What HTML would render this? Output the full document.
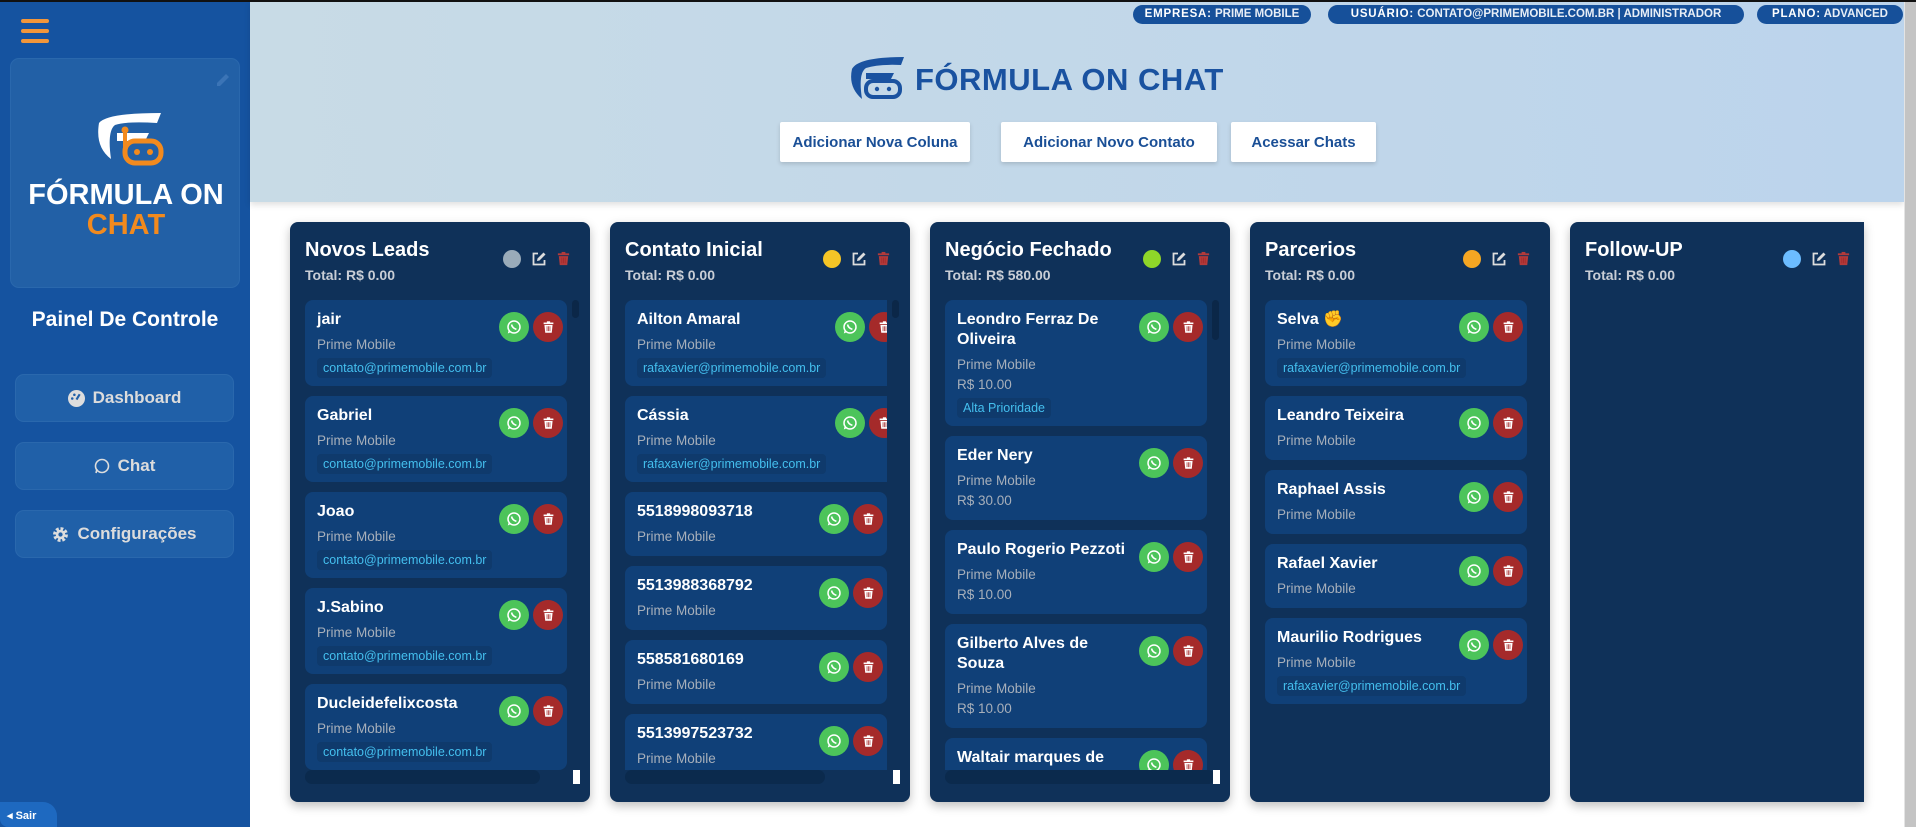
<!DOCTYPE html>
<html><head><meta charset="utf-8"><style>
*{box-sizing:border-box;margin:0;padding:0}
body{width:1916px;height:827px;overflow:hidden;font-family:"Liberation Sans",sans-serif;background:#fff;position:relative}
#top{position:absolute;left:0;top:0;width:1916px;height:2px;background:#111;z-index:9}
#side{position:absolute;left:0;top:0;width:250px;height:827px;background:#1553a0}
.hb{position:absolute;left:21px;width:28px;height:4px;border-radius:2px;background:#f2963a}
#logo{position:absolute;left:10px;top:58px;width:230px;height:230px;background:#2260a6;border-radius:9px;border:1px solid #2a68ad}
#logo .t1{position:absolute;left:0;width:230px;top:120px;text-align:center;color:#fff;font-weight:bold;font-size:29px;white-space:nowrap}
#logo .t2{position:absolute;left:0;width:230px;top:150px;text-align:center;color:#f28a1e;font-weight:bold;font-size:29px;white-space:nowrap}
#pc{position:absolute;left:0;width:250px;top:308px;text-align:center;color:#fff;font-weight:bold;font-size:21px}
.nav{position:absolute;left:15px;width:219px;height:48px;border-radius:9px;background:#2060a8;border:1px solid #2a68ad;color:#dcdcdc;font-weight:bold;font-size:17px;display:flex;align-items:center;justify-content:center;gap:8px}
#sair{position:absolute;left:0;top:802px;width:57px;height:25px;background:#1e69c0;border-radius:0 14px 0 8px;color:#fff;font-weight:bold;font-size:11px;padding:7px 0 0 7px}
#head{position:absolute;left:250px;top:2px;width:1654px;height:200px;background:linear-gradient(90deg,#c8dbe6,#bcd4ec);box-shadow:0 3px 6px rgba(0,0,0,.12)}
.bd{position:absolute;top:3px;height:19px;background:#16509a;border-radius:10px;color:#e8eef6;font-size:11.5px;font-weight:bold;line-height:19px;text-align:center;white-space:nowrap}
.bd b{color:#fff;letter-spacing:.8px}
#title{position:absolute;left:915px;top:62px;color:#1a52a0;font-weight:bold;font-size:31px;letter-spacing:.5px;white-space:nowrap}
.btn{position:absolute;top:122px;height:40px;background:#fff;color:#1a4f96;font-weight:bold;font-size:15px;display:flex;align-items:center;justify-content:center;box-shadow:0 2px 4px rgba(0,0,0,.15);border-radius:2px}
#sb{position:absolute;left:1904px;top:0;width:12px;height:827px;background:#c4c4c4;border-left:1px solid #e4e4e4}
.col{position:absolute;top:222px;width:300px;height:580px;background:#0f3159;border-radius:8px;box-shadow:0 4px 10px rgba(0,0,0,.25);overflow:hidden}
.col h2{position:absolute;left:15px;top:17px;color:#fff;font-size:20px;font-weight:bold}
.col .tot{position:absolute;left:15px;top:45px;color:#c9ced6;font-size:14px;font-weight:bold}
.dot{position:absolute;top:28px;left:213px;width:18px;height:18px;border-radius:50%}
.ed{position:absolute;top:29px;left:241px}
.tr{position:absolute;top:28px;left:266px}
.list{position:absolute;left:15px;top:78px;width:262px;height:470px;overflow:hidden}
.vs{position:absolute;left:282px;top:78px;width:7px;height:18px;border-radius:4px;background:#0b2748}
.hs{position:absolute;left:15px;top:548px;width:235px;height:14px;border-radius:7px;background:#0b2a4d}
.sq{position:absolute;left:283px;top:548px;width:7px;height:14px;background:#fff}
.card{position:relative;background:#104078;border-radius:8px;padding:10px 12px 8px;margin-bottom:10px}
.card .n{color:#fff;font-weight:bold;font-size:16px;line-height:20px;padding-right:58px}
.card .c{color:#a7afba;font-size:13.5px;line-height:18px;margin-top:6px}
.card .v{color:#a7afba;font-size:13.5px;line-height:18px;margin-top:2px}
.card .e{display:inline-block;background:#0f3a6c;color:#44bfee;font-size:12.5px;line-height:16px;padding:2px 6px;border-radius:4px;margin-top:4px}
.card.b{padding-bottom:10px}
.wa,.rd{position:absolute;top:12px;width:30px;height:30px;border-radius:50%;display:flex;align-items:center;justify-content:center}
.wa{right:38px;background:#4cc45a}
.rd{right:4px;background:#a52a2a}
</style></head><body>
<div id="top"></div>
<div id="side">
<div class="hb" style="top:19px"></div><div class="hb" style="top:29px"></div><div class="hb" style="top:39px"></div>
<div id="logo">
<svg style="position:absolute;left:204px;top:12px" width="16" height="16" viewBox="0 0 16 16"><path d="M2 12 L11 3 L14 6 L5 15 L2 15Z" fill="#3b74b6"/></svg>
<svg style="position:absolute;left:76px;top:52px" width="80" height="58" viewBox="0 0 80 58"><path d="M12 12 Q20 2 74 2 L70 12 Q40 10 28 14 Q20 20 24 48 Q8 36 12 12Z" fill="#fff"/><path d="M30 22 L62 22 L58 30 L30 30Z" fill="#fff"/><rect x="38" y="30" width="36" height="22" rx="10" fill="none" stroke="#f28a1e" stroke-width="5"/><circle cx="50" cy="41" r="3" fill="#f28a1e"/><circle cx="63" cy="41" r="3" fill="#f28a1e"/><path d="M38 38 L38 20" stroke="#f28a1e" stroke-width="4"/><circle cx="38" cy="19" r="3.5" fill="#f28a1e"/></svg>
<div class="t1">FÓRMULA ON</div><div class="t2">CHAT</div></div>
<div id="pc">Painel De Controle</div>
<div class="nav" style="top:374px"><svg width="17" height="17" viewBox="0 0 16 16"><circle cx="8" cy="8" r="8" fill="#ddd"/><path d="M8 9 L11 4" stroke="#2060a8" stroke-width="2"/><circle cx="4" cy="8" r="1.2" fill="#2060a8"/><circle cx="6" cy="4.5" r="1.2" fill="#2060a8"/></svg>Dashboard</div>
<div class="nav" style="top:442px"><svg width="16" height="16" viewBox="0 0 16 16"><circle cx="8" cy="8" r="6.5" fill="none" stroke="#ddd" stroke-width="1.6"/><path d="M2 15 L3 11" stroke="#ddd" stroke-width="1.6"/></svg>Chat</div>
<div class="nav" style="top:510px"><svg width="17" height="17" viewBox="0 0 16 16"><circle cx="8" cy="8" r="5" fill="none" stroke="#ddd" stroke-width="4" stroke-dasharray="2.4 1.5"/><circle cx="8" cy="8" r="4.5" fill="#ddd"/><circle cx="8" cy="8" r="2" fill="#2060a8"/></svg>Configurações</div>
<div id="sair">◂ Sair</div>
</div>
<div id="head">
<div class="bd" style="left:883px;width:178px"><b>EMPRESA:</b> PRIME MOBILE</div>
<div class="bd" style="left:1078px;width:416px"><b>USUÁRIO:</b> CONTATO@PRIMEMOBILE.COM.BR | ADMINISTRADOR</div>
<div class="bd" style="left:1507px;width:146px"><b>PLANO:</b> ADVANCED</div>
</div>
<svg style="position:absolute;left:848px;top:55px" width="58" height="46" viewBox="0 0 58 46"><path d="M4 14 Q10 2 56 2 L53 10 Q30 9 18 13 Q10 18 14 44 Q0 32 4 14Z" fill="#1a52a0"/><path d="M18 18 L46 18 L43 24 L18 24Z" fill="#1a52a0"/><rect x="18" y="26" width="34" height="16" rx="7" fill="none" stroke="#1a52a0" stroke-width="4"/><circle cx="29" cy="34" r="2.2" fill="#1a52a0"/><circle cx="41" cy="34" r="2.2" fill="#1a52a0"/></svg>
<div id="title">FÓRMULA ON CHAT</div>
<div class="btn" style="left:780px;width:190px">Adicionar Nova Coluna</div>
<div class="btn" style="left:1001px;width:216px">Adicionar Novo Contato</div>
<div class="btn" style="left:1231px;width:145px">Acessar Chats</div>
<div id="sb"></div>

<svg width="0" height="0" style="position:absolute"><defs>
<symbol id="w" viewBox="0 0 16 16"><circle cx="8" cy="8" r="6" fill="none" stroke="#fff" stroke-width="1.5"/><path d="M1.8 14.5 L2.8 10.8 L5 13Z" fill="#fff"/><path d="M5.6 5.5 Q6 8.8 10.4 10.4" stroke="#fff" stroke-width="1.6" fill="none"/></symbol>
<symbol id="t" viewBox="0 0 16 16"><rect x="2" y="2.5" width="12" height="2" fill="currentColor"/><rect x="6" y="1" width="4" height="2" fill="currentColor"/><path d="M3 5.5 H13 L12 15 H4Z" fill="currentColor"/><path d="M6.2 7 V13 M8 7 V13 M9.8 7 V13" stroke="#a52a2a" stroke-width=".9"/></symbol>
</defs></svg>

<div class="col" style="left:290px"><h2>Novos Leads</h2><div class="tot">Total: R$ 0.00</div><div class="dot" style="background:#9aabb9"></div>
<svg class="ed" width="16" height="16" viewBox="0 0 16 16"><path d="M7 2.5 H2.5 V13.5 H13.5 V9" fill="none" stroke="#ddd" stroke-width="1.8"/><path d="M6 10 L6.5 7.5 L12.5 1.5 L14.5 3.5 L8.5 9.5Z" fill="#ddd"/></svg>
<svg class="tr" width="15" height="17" viewBox="0 0 16 16" style="color:#b23a3a"><use href="#t"/></svg>
<div class="list">
<div class="card"><div class="n">jair</div><div class="c">Prime Mobile</div><div class="e">contato@primemobile.com.br</div><div class="wa"><svg width="16" height="16"><use href="#w"/></svg></div><div class="rd"><svg width="13" height="14" style="color:#fff"><use href="#t"/></svg></div></div>
<div class="card"><div class="n">Gabriel</div><div class="c">Prime Mobile</div><div class="e">contato@primemobile.com.br</div><div class="wa"><svg width="16" height="16"><use href="#w"/></svg></div><div class="rd"><svg width="13" height="14" style="color:#fff"><use href="#t"/></svg></div></div>
<div class="card"><div class="n">Joao</div><div class="c">Prime Mobile</div><div class="e">contato@primemobile.com.br</div><div class="wa"><svg width="16" height="16"><use href="#w"/></svg></div><div class="rd"><svg width="13" height="14" style="color:#fff"><use href="#t"/></svg></div></div>
<div class="card"><div class="n">J.Sabino</div><div class="c">Prime Mobile</div><div class="e">contato@primemobile.com.br</div><div class="wa"><svg width="16" height="16"><use href="#w"/></svg></div><div class="rd"><svg width="13" height="14" style="color:#fff"><use href="#t"/></svg></div></div>
<div class="card"><div class="n">Ducleidefelixcosta</div><div class="c">Prime Mobile</div><div class="e">contato@primemobile.com.br</div><div class="wa"><svg width="16" height="16"><use href="#w"/></svg></div><div class="rd"><svg width="13" height="14" style="color:#fff"><use href="#t"/></svg></div></div>
</div><div class="vs"></div><div class="hs"></div><div class="sq"></div></div>

<div class="col" style="left:610px"><h2>Contato Inicial</h2><div class="tot">Total: R$ 0.00</div><div class="dot" style="background:#f5c526"></div>
<svg class="ed" width="16" height="16" viewBox="0 0 16 16"><path d="M7 2.5 H2.5 V13.5 H13.5 V9" fill="none" stroke="#ddd" stroke-width="1.8"/><path d="M6 10 L6.5 7.5 L12.5 1.5 L14.5 3.5 L8.5 9.5Z" fill="#ddd"/></svg>
<svg class="tr" width="15" height="17" viewBox="0 0 16 16" style="color:#b23a3a"><use href="#t"/></svg>
<div class="list">
<div class="card" style="width:270px"><div class="n">Ailton Amaral</div><div class="c">Prime Mobile</div><div class="e">rafaxavier@primemobile.com.br</div><div class="wa" style="right:30px"><svg width="16" height="16"><use href="#w"/></svg></div><div class="rd" style="right:-4px"><svg width="13" height="14" style="color:#fff"><use href="#t"/></svg></div></div>
<div class="card" style="width:270px"><div class="n">Cássia</div><div class="c">Prime Mobile</div><div class="e">rafaxavier@primemobile.com.br</div><div class="wa" style="right:30px"><svg width="16" height="16"><use href="#w"/></svg></div><div class="rd" style="right:-4px"><svg width="13" height="14" style="color:#fff"><use href="#t"/></svg></div></div>
<div class="card b"><div class="n">5518998093718</div><div class="c">Prime Mobile</div><div class="wa"><svg width="16" height="16"><use href="#w"/></svg></div><div class="rd"><svg width="13" height="14" style="color:#fff"><use href="#t"/></svg></div></div>
<div class="card b"><div class="n">5513988368792</div><div class="c">Prime Mobile</div><div class="wa"><svg width="16" height="16"><use href="#w"/></svg></div><div class="rd"><svg width="13" height="14" style="color:#fff"><use href="#t"/></svg></div></div>
<div class="card b"><div class="n">558581680169</div><div class="c">Prime Mobile</div><div class="wa"><svg width="16" height="16"><use href="#w"/></svg></div><div class="rd"><svg width="13" height="14" style="color:#fff"><use href="#t"/></svg></div></div>
<div class="card b"><div class="n">5513997523732</div><div class="c">Prime Mobile</div><div class="wa"><svg width="16" height="16"><use href="#w"/></svg></div><div class="rd"><svg width="13" height="14" style="color:#fff"><use href="#t"/></svg></div></div>
</div><div class="vs"></div><div class="hs" style="width:200px"></div><div class="sq"></div></div>

<div class="col" style="left:930px"><h2>Negócio Fechado</h2><div class="tot">Total: R$ 580.00</div><div class="dot" style="background:#8fd629"></div>
<svg class="ed" width="16" height="16" viewBox="0 0 16 16"><path d="M7 2.5 H2.5 V13.5 H13.5 V9" fill="none" stroke="#ddd" stroke-width="1.8"/><path d="M6 10 L6.5 7.5 L12.5 1.5 L14.5 3.5 L8.5 9.5Z" fill="#ddd"/></svg>
<svg class="tr" width="15" height="17" viewBox="0 0 16 16" style="color:#b23a3a"><use href="#t"/></svg>
<div class="list">
<div class="card"><div class="n" style="padding-right:70px">Leondro Ferraz De Oliveira</div><div class="c">Prime Mobile</div><div class="v">R$ 10.00</div><div class="e">Alta Prioridade</div><div class="wa"><svg width="16" height="16"><use href="#w"/></svg></div><div class="rd"><svg width="13" height="14" style="color:#fff"><use href="#t"/></svg></div></div>
<div class="card b"><div class="n">Eder Nery</div><div class="c">Prime Mobile</div><div class="v">R$ 30.00</div><div class="wa"><svg width="16" height="16"><use href="#w"/></svg></div><div class="rd"><svg width="13" height="14" style="color:#fff"><use href="#t"/></svg></div></div>
<div class="card b"><div class="n" style="padding-right:50px;white-space:nowrap">Paulo Rogerio Pezzoti</div><div class="c">Prime Mobile</div><div class="v">R$ 10.00</div><div class="wa"><svg width="16" height="16"><use href="#w"/></svg></div><div class="rd"><svg width="13" height="14" style="color:#fff"><use href="#t"/></svg></div></div>
<div class="card b"><div class="n" style="padding-right:70px">Gilberto Alves de Souza</div><div class="c">Prime Mobile</div><div class="v">R$ 10.00</div><div class="wa"><svg width="16" height="16"><use href="#w"/></svg></div><div class="rd"><svg width="13" height="14" style="color:#fff"><use href="#t"/></svg></div></div>
<div class="card b"><div class="n" style="padding-right:70px">Waltair marques de</div><div class="c">Prime Mobile</div><div class="wa"><svg width="16" height="16"><use href="#w"/></svg></div><div class="rd"><svg width="13" height="14" style="color:#fff"><use href="#t"/></svg></div></div>
</div><div class="vs" style="height:40px"></div><div class="hs" style="width:270px"></div><div class="sq"></div></div>

<div class="col" style="left:1250px"><h2>Parcerios</h2><div class="tot">Total: R$ 0.00</div><div class="dot" style="background:#f5a623"></div>
<svg class="ed" width="16" height="16" viewBox="0 0 16 16"><path d="M7 2.5 H2.5 V13.5 H13.5 V9" fill="none" stroke="#ddd" stroke-width="1.8"/><path d="M6 10 L6.5 7.5 L12.5 1.5 L14.5 3.5 L8.5 9.5Z" fill="#ddd"/></svg>
<svg class="tr" width="15" height="17" viewBox="0 0 16 16" style="color:#b23a3a"><use href="#t"/></svg>
<div class="list">
<div class="card"><div class="n">Selva <span style="color:#f5b81d">✊</span></div><div class="c">Prime Mobile</div><div class="e">rafaxavier@primemobile.com.br</div><div class="wa"><svg width="16" height="16"><use href="#w"/></svg></div><div class="rd"><svg width="13" height="14" style="color:#fff"><use href="#t"/></svg></div></div>
<div class="card b"><div class="n">Leandro Teixeira</div><div class="c">Prime Mobile</div><div class="wa"><svg width="16" height="16"><use href="#w"/></svg></div><div class="rd"><svg width="13" height="14" style="color:#fff"><use href="#t"/></svg></div></div>
<div class="card b"><div class="n">Raphael Assis</div><div class="c">Prime Mobile</div><div class="wa"><svg width="16" height="16"><use href="#w"/></svg></div><div class="rd"><svg width="13" height="14" style="color:#fff"><use href="#t"/></svg></div></div>
<div class="card b"><div class="n">Rafael Xavier</div><div class="c">Prime Mobile</div><div class="wa"><svg width="16" height="16"><use href="#w"/></svg></div><div class="rd"><svg width="13" height="14" style="color:#fff"><use href="#t"/></svg></div></div>
<div class="card"><div class="n" style="white-space:nowrap">Maurilio Rodrigues</div><div class="c">Prime Mobile</div><div class="e">rafaxavier@primemobile.com.br</div><div class="wa"><svg width="16" height="16"><use href="#w"/></svg></div><div class="rd"><svg width="13" height="14" style="color:#fff"><use href="#t"/></svg></div></div>
</div></div>

<div class="col" style="left:1570px;width:294px;border-radius:8px 0 0 8px"><h2>Follow-UP</h2><div class="tot">Total: R$ 0.00</div><div class="dot" style="background:#6cbcff"></div>
<svg class="ed" width="16" height="16" viewBox="0 0 16 16"><path d="M7 2.5 H2.5 V13.5 H13.5 V9" fill="none" stroke="#ddd" stroke-width="1.8"/><path d="M6 10 L6.5 7.5 L12.5 1.5 L14.5 3.5 L8.5 9.5Z" fill="#ddd"/></svg>
<svg class="tr" width="15" height="17" viewBox="0 0 16 16" style="color:#b23a3a"><use href="#t"/></svg>
</div>
</body></html>
